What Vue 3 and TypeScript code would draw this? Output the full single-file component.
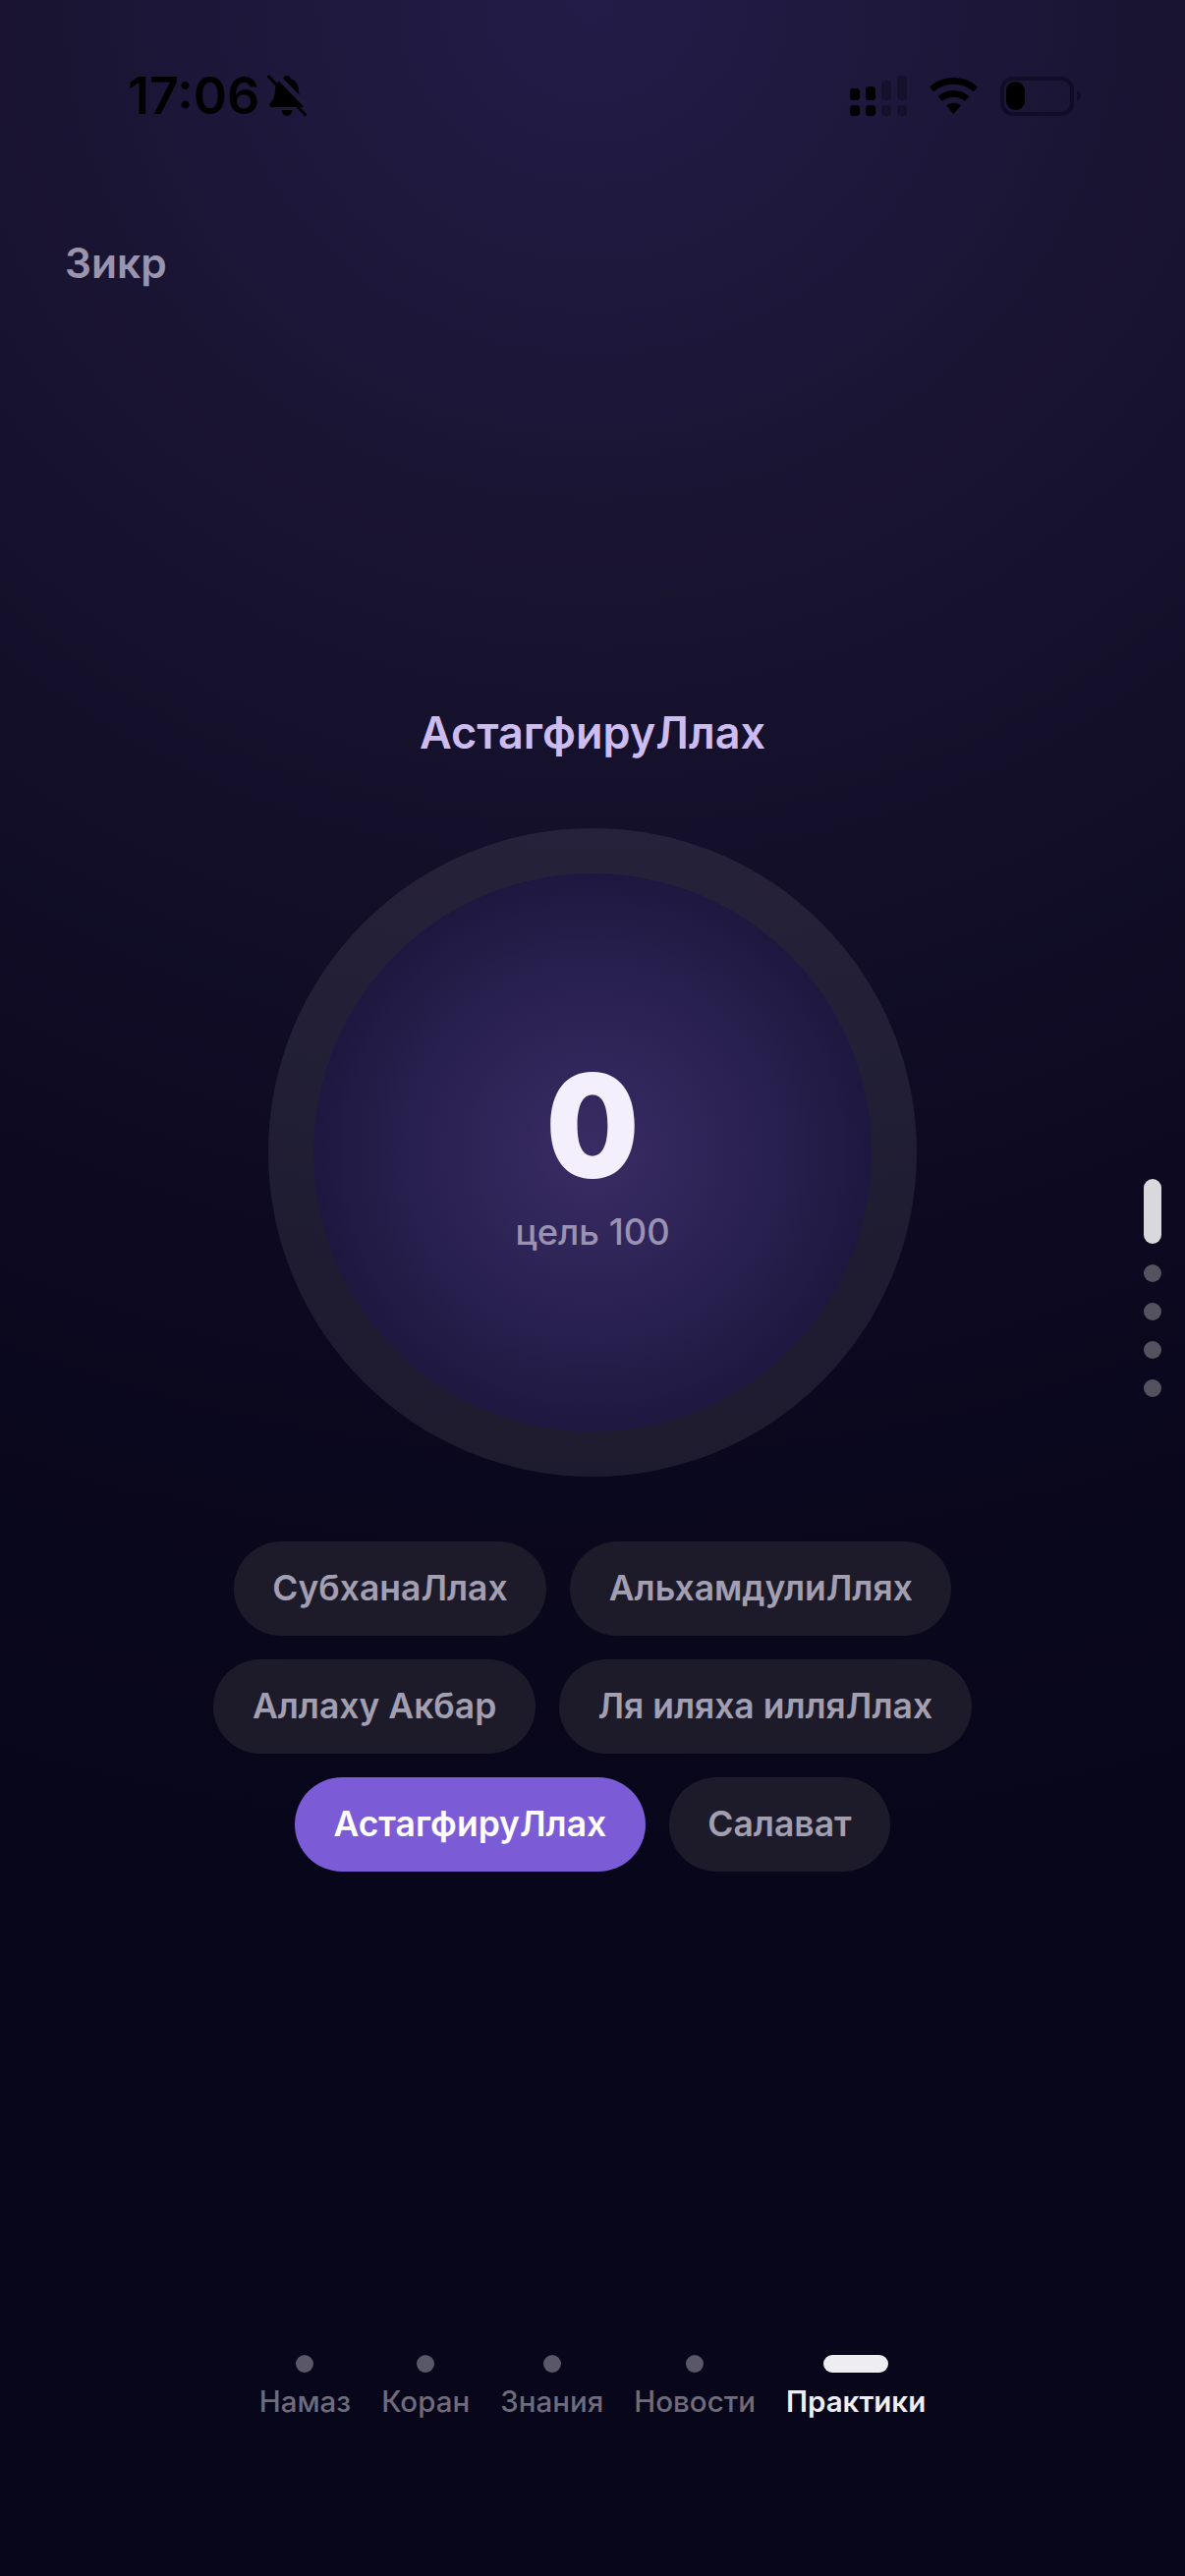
<script setup lang="ts">
const dhikrs = [
  { label: "СубханаЛлах", active: false },
  { label: "АльхамдулиЛлях", active: false },
  { label: "Аллаху Акбар", active: false },
  { label: "Ля иляха илляЛлах", active: false },
  { label: "АстагфируЛлах", active: true },
  { label: "Салават", active: false },
];

const tabs = [
  { label: "Намаз", active: false },
  { label: "Коран", active: false },
  { label: "Знания", active: false },
  { label: "Новости", active: false },
  { label: "Практики", active: true },
];

// первая страница активна
const pages = [true, false, false, false, false];
</script>

<template>
  <div class="screen">
    <header class="status">
      <div class="status-left">
        <span class="time">17:06</span>
        <svg class="bell" width="40" height="44" viewBox="0 0 40 44">
          <path
            d="M20 1c2.200 0 3.600 1.500 3.900 3.300 5 1.500 7.700 5.600 8 11 .3 5.500 1.400 9.600 4.900 13.400 1.600 1.800.9 4.300-1.700 4.300H4.900c-2.600 0-3.300-2.500-1.700-4.300 3.500-3.800 4.600-7.900 4.900-13.400.3-5.400 3-9.500 8-11C16.400 2.500 17.800 1 20 1zM14.500 36h11c-.4 3.400-2.700 6-5.500 6s-5.100-2.600-5.500-6z"
            fill="#000"
          />
          <path d="M5 0 42 38" stroke="#1e1a3d" stroke-width="5" transform="translate(1.500 -2.500)" />
          <path d="M1.500 2 39 41" stroke="#000" stroke-width="3" stroke-linecap="round" />
        </svg>
      </div>
      <svg class="status-icons" width="244" height="44" viewBox="860 76 244 44">
        <g fill="#000">
          <rect x="865" y="90" width="10" height="12" rx="3.500" />
          <rect x="881" y="88" width="10" height="14" rx="3.500" />
          <rect x="865" y="107" width="10" height="11" rx="3.500" />
          <rect x="881" y="107" width="10" height="11" rx="3.500" />
        </g>
        <g fill="#15112d">
          <rect x="897" y="82" width="10" height="20" rx="3.500" />
          <rect x="913" y="77" width="10" height="25" rx="3.500" />
          <rect x="897" y="107" width="10" height="11" rx="3.500" />
          <rect x="913" y="107" width="10" height="11" rx="3.500" />
        </g>
        <path
          d="M946 88.500C952.500 82.500 961 79 970.500 79S988.500 82.500 995 88.500L990.800 93.500C985.500 88.600 978.400 85.700 970.500 85.700S955.500 88.600 950.200 93.500ZM954.500 98C958.800 94.200 964.400 92 970.500 92S982.200 94.200 986.500 98L982.200 103C979.100 100.300 975 98.700 970.500 98.700S961.900 100.300 958.800 103ZM963 107.400C964.900 105.700 967.600 104.700 970.500 104.700S976.100 105.700 978 107.400L970.500 116Z"
          fill="#000"
        />
        <rect x="1020" y="80" width="71" height="36" rx="11" fill="none" stroke="#100d26" stroke-width="4" />
        <rect x="1024" y="83" width="19" height="29" rx="9" fill="#000" />
        <path d="M1096 92c2.500 1 4 3 4 5.500s-1.500 4.500-4 5.500z" fill="#100d26" />
      </svg>
    </header>

    <h1 class="page-title">Зикр</h1>

    <h2 class="dhikr-name">АстагфируЛлах</h2>

    <div class="ring">
      <div class="ring-inner">
        <span class="count">0</span>
        <span class="goal">цель 100</span>
      </div>
    </div>

    <div class="chips">
      <button
        v-for="item in dhikrs"
        :key="item.label"
        class="chip"
        :class="{ 'chip-active': item.active }"
      >
        {{ item.label }}
      </button>
    </div>

    <nav class="tabs">
      <div
        v-for="tab in tabs"
        :key="tab.label"
        class="tab"
        :class="{ 'tab-active': tab.active }"
      >
        <span class="tab-mark" />
        <span class="tab-label">{{ tab.label }}</span>
      </div>
    </nav>

    <!-- индикатор страниц поверх контента -->
    <div class="pager">
      <span
        v-for="(on, index) in pages"
        :key="index"
        class="pager-dot"
        :class="{ 'pager-on': on }"
      />
    </div>
  </div>
</template>

<style scoped>
.screen {
  position: relative;
  width: 1206px;
  height: 2622px;
  display: flex;
  flex-direction: column;
  align-items: center;
  overflow: hidden;
  font-family: Inter, "Noto Sans", sans-serif;
  background: radial-gradient(ellipse 2000px 1900px at 50% 0, #231c48 0%, #18132f 33%, #0c0920 70%, #08061a 100%);
}

.status {
  align-self: stretch;
  height: 68px;
  margin-top: 64px;
  padding: 0 102px 0 130px;
  display: flex;
  justify-content: space-between;
  align-items: center;
}

.status-left {
  display: flex;
  align-items: center;
  gap: 8px;
}

.time {
  font-size: 52px;
  line-height: 68px;
  font-weight: 600;
  color: #000;
}

.page-title {
  align-self: flex-start;
  margin: 112px 0 0 66px;
  font-size: 42.500px;
  line-height: 48px;
  font-weight: 600;
  color: #9a94ae;
}

.dhikr-name {
  margin: 426px 0 0;
  font-size: 45px;
  line-height: 56px;
  font-weight: 600;
  color: #cdbcf0;
}

.ring {
  width: 660px;
  height: 660px;
  margin-top: 69px;
  padding: 46px;
  box-sizing: border-box;
  border-radius: 50%;
  background: rgba(255, 255, 255, 0.08);
}

.ring-inner {
  width: 100%;
  height: 100%;
  border-radius: 50%;
  display: flex;
  flex-direction: column;
  align-items: center;
  justify-content: center;
  gap: 11px;
  background: radial-gradient(circle closest-side, #392c64 0%, #2c2354 50%, #1e1840 100%);
}

.count {
  font-size: 146px;
  line-height: 150px;
  font-weight: 900;
  color: #f3effd;
  transform: scaleX(0.91);
}

.goal {
  font-size: 36.300px;
  line-height: 44px;
  font-weight: 500;
  color: #9a92b2;
}

.chips {
  width: 800px;
  margin-top: 66px;
  display: flex;
  flex-wrap: wrap;
  justify-content: center;
  gap: 24px;
}

.chip {
  height: 96px;
  padding: 0 39.500px 2px;
  border: none;
  border-radius: 48px;
  font-family: inherit;
  font-size: 35.500px;
  font-weight: 600;
  color: #a29fb2;
  background: #1d1b2a;
}

.chip-active {
  color: #fff;
  background: #7b5cd6;
}

.tabs {
  margin-top: auto;
  margin-bottom: 160px;
  display: flex;
  gap: 31px;
}

.tab {
  display: flex;
  flex-direction: column;
  align-items: center;
  gap: 11px;
}

.tab-mark {
  width: 18px;
  height: 18px;
  border-radius: 9px;
  background: #5a5768;
}

.tab-label {
  font-size: 29.500px;
  line-height: 36px;
  font-weight: 550;
  color: #6e6b7b;
}

.tab-active .tab-mark {
  width: 66px;
  background: #eeeef2;
}

.tab-active .tab-label {
  font-weight: 600;
  color: #eeeef2;
}

.pager {
  position: absolute;
  top: 1200px;
  right: 24px;
  display: flex;
  flex-direction: column;
  gap: 21px;
}

.pager-dot {
  width: 18px;
  height: 18px;
  border-radius: 9px;
  background: #55525f;
}

.pager-on {
  height: 66px;
  background: #d9d9dd;
}
</style>
